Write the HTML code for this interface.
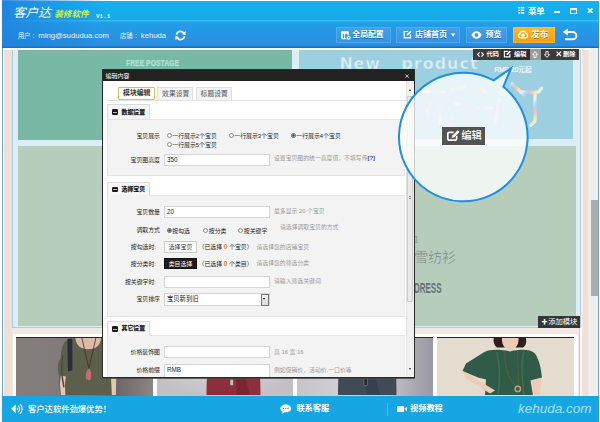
<!DOCTYPE html>
<html lang="zh-CN">
<head>
<meta charset="utf-8">
<title>客户达 装修软件</title>
<style>
*{box-sizing:border-box;margin:0;padding:0}
html,body{width:600px;height:422px;overflow:hidden;background:#fff}
body{position:relative;font-family:"Liberation Sans","Noto Sans CJK SC",sans-serif;font-size:7px;color:#333;-webkit-text-size-adjust:none}
.abs{position:absolute}
.t{position:absolute;white-space:nowrap;line-height:1}
/* header */
#top{left:0;top:0;width:600px;height:22px;background:linear-gradient(90deg,rgba(32,128,222,0.9) 0,rgba(32,135,225,0.6) 45px,rgba(32,140,228,0) 110px),linear-gradient(#fff 0,#fff 0.9px,#14b3ee 1.4px,#16a9e9 19.5px,#3bbcf0 20.5px,#2aa6ea 22px)}
#bar2{left:0;top:22px;width:600px;height:25.8px;background:linear-gradient(90deg,rgba(26,120,214,0.55) 0,rgba(26,125,218,0) 100px),linear-gradient(#219fea,#2a8ce0 24.2px,#1b6db8 24.8px)}
#bot{left:0;top:395.7px;width:600px;height:27px;background:#16a6e3}
.btn{position:absolute;top:27px;height:15.7px;background:linear-gradient(#41a1ea,#3493e2);box-shadow:inset 0 0 0 0.7px #5cb1ef;text-shadow:0 0.5px 0.5px rgba(0,40,100,0.45);border-radius:1px;color:#fff;font-size:8px;line-height:15.5px;white-space:nowrap;font-weight:bold}
/* page */
#page{left:2px;top:47px;width:588px;height:349px;background:#f0e8e1;overflow:hidden}
.ph{top:290.1px;height:59px;border-top:1.5px solid #2a2522;overflow:hidden}
/* modal */
#modal{left:102px;top:69px;width:312.5px;height:309.3px;box-shadow:0 0.8px 0 #444;background:#fff;border:1px solid #2a2a2a;overflow:hidden}
#mtitle{left:0;top:0;width:312px;height:10.5px;background:#222;color:#fff}
.sec{position:absolute;background:#f3f3f3;border:1px solid #e4e4e4;border-right-color:#ececec}
.sech{position:absolute;background:#f6f6f6;border:1px solid #dcdcdc;border-bottom:1px solid #f3f3f3}
.ico{position:absolute;left:4.4px;top:3.9px;width:6px;height:5.5px;background:#1a1a1a;border-radius:1.2px}
.ico:after{content:"";position:absolute;left:1.3px;top:2.35px;width:3.4px;height:0.8px;background:#bbb}
.tab{position:absolute;background:#f3f3f3;border:1px solid #dedede;border-bottom:none;font-size:6.8px;color:#555}
.tab.on{background:#fff;border:1px solid #e5b85c;border-radius:1px}
.lab{margin-top:1px;position:absolute;text-align:right;color:#222;white-space:nowrap;line-height:1;font-size:5.9px}
.inp{position:absolute;background:#fff;border:1px solid #d4d4d4;font-size:6.3px;padding-left:2px;color:#222;white-space:nowrap}
.hint{margin-top:0.9px;position:absolute;color:#999;white-space:nowrap;line-height:1;font-size:5.85px}
.rad{display:inline-block;width:5.4px;height:5.4px;border:1px solid #8e8e8e;border-radius:50%;background:#fafafa;vertical-align:-0.8px;margin-right:0.4px}
.rad.on{background:radial-gradient(#1d3f78 35%,#8fb0d8 60%,#e8eef6 75%);border-color:#667}
.opt{margin-top:0.7px;position:absolute;white-space:nowrap;line-height:1;font-size:5.9px;color:#222}
.bt{position:absolute;font-size:5.9px;text-align:center;line-height:10px;white-space:nowrap}
</style>
</head>
<body>
<!-- page background -->
<div class="abs" id="page">
  <div class="abs" style="left:0;top:0;width:2.2px;height:349px;background:#fafcfe"></div>
  <div class="abs" style="left:2.2px;top:0;width:8.3px;height:349px;background:#ece0d7"></div>
  <div class="abs" style="left:577.4px;top:0;width:10.6px;height:349px;background:linear-gradient(90deg,#b4cde2 0,#b4cde2 1px,#fbfaf9 1.2px,#fbfaf9 2.4px,#eee1d8 3.6px,#eee1d8 8.5px,#f5f0ed 10.6px)"></div>
  <!-- module area light-blue frame -->
  <div class="abs" style="left:10.2px;top:0;width:568.4px;height:281.4px;background:#dcedf5;border:1.2px solid #aec9e0;border-top:none"></div>
  <!-- row 1 -->
  <div class="abs" style="left:15.5px;top:3.3px;width:274px;height:89.4px;background:#78b9a6">
    <span class="t" style="left:108.3px;top:8.3px;font-size:8.4px;font-weight:bold;color:#b2dfd0;-webkit-text-stroke:0.25px #b2dfd0;transform:scaleX(0.815);transform-origin:0 0">FREE POSTAGE</span>
  </div>
  <div class="abs" style="left:297px;top:3.4px;width:274px;height:88.8px;background:#9cd0e0;overflow:hidden">
    <span class="t" style="left:40.4px;top:5.6px;font-size:15.9px;font-weight:bold;color:#dceef5;font-family:'DejaVu Sans',sans-serif;letter-spacing:0.9px;-webkit-text-stroke:0.4px #9cd0e0">New</span>
    <span class="t" style="left:102.4px;top:5.6px;font-size:15.9px;font-weight:bold;color:#dceef5;font-family:'DejaVu Sans',sans-serif;letter-spacing:1.05px;-webkit-text-stroke:0.4px #9cd0e0">product</span>
    <span class="t" style="left:195.5px;top:16.4px;font-size:6.6px;color:#f2fafc;-webkit-text-stroke:0.2px #f2fafc">RMB 20元起</span>
    <svg class="abs" style="left:0;top:0" width="274" height="93" viewBox="299 50.2 274 93" fill="none" stroke-width="3.2" stroke-linecap="round" stroke-linejoin="round">
      <defs><linearGradient id="cf" x1="0" y1="0" x2="12" y2="9" gradientUnits="userSpaceOnUse" spreadMethod="repeat"><stop offset="0" stop-color="#f3b9c6"/><stop offset="0.25" stop-color="#f6e6b0"/><stop offset="0.5" stop-color="#e9f3f6"/><stop offset="0.75" stop-color="#b9d6ee"/><stop offset="1" stop-color="#f3b9c6"/></linearGradient></defs>
      <g stroke="url(#cf)">
        <path d="M512 84L524 95M520.5 92.3H538.5L541.5 88.5M535 94.5V121.5L530.5 125.5"/>
        <path opacity="0.6" d="M480 88L489 96M478 108H492M497 92H508M500 100L495 122"/>
        <path opacity="0.6" d="M424 92H445M430 102L427 112M452 90L464 87M440 106V124M456 104H466M452 118L449 126"/>
      </g>
    </svg>
  </div>
  <!-- row 2 -->
  <div class="abs" style="left:15.5px;top:99.3px;width:274px;height:179.7px;background:#b6cdbc"></div>
  <div class="abs" style="left:297px;top:99.3px;width:276.7px;height:179.7px;background:#b6cdbc">
    <span class="t" style="left:111px;top:89.7px;font-size:8px;color:#7f908d">包</span>
    <span class="t" style="left:115.3px;top:104.9px;font-size:13.9px;font-weight:300;color:#788888">雪纺衫</span>
    <span class="t" style="left:115px;top:134.9px;font-size:14.5px;font-weight:bold;color:#62737b;transform:scaleX(0.55);transform-origin:0 0">DRESS</span>
  </div>
  <!-- add module button -->
  <div class="abs" style="left:536px;top:268.5px;width:42px;height:12.5px;background:#32373b">
    <span class="t" style="left:3.4px;top:3.2px;font-size:6px;color:#fff;font-weight:bold">✚</span>
    <span class="t" style="left:10.2px;top:2.7px;font-size:7.3px;color:#fff">添加模块</span>
  </div>
  <!-- photos -->
  <div class="abs" style="left:10.5px;top:287px;width:565.8px;height:63px;background:#fff"></div>
  <div class="abs ph" id="p1" style="left:14.1px;width:137.1px;background:linear-gradient(90deg,#837d7c,#7f7978 50%,#6f6865 74%,#8c8583)"><svg class="abs" style="left:0;top:0" width="137.1" height="57" viewBox="16.1 338.6 137.1 57">
<path d="M75 338H101.5L101 345C99 351 78 351 76 345Z" fill="#dcbba6"/>
<path d="M66 341C62 345 61 352 61 358C58 362 57 370 59 376L60 396H113L113 362C112 352 109 345 104 340L101 338.6C101 354 76 354 75.5 338.6Z" fill="#5d5f4d"/>
<path d="M61 376L60 384L61 396H65.5L65 384L66 377Z" fill="#e3c6b4"/>
<path d="M63 356C61 366 62 378 64 388" fill="none" stroke="#4a4c3d" stroke-width="1.5"/>
<path d="M67.5 339.5L72.4 339L72.4 371L68 372Z" fill="#2a2c3a"/>
<path d="M82 338.6L89 369L96 338.6" fill="none" stroke="#4a2a2a" stroke-width="0.8"/>
<path d="M89 369C92 372 92 378 90 381L86.5 380C85 376 86 371 89 369Z" fill="#c56a72"/>
<path d="M111 376L116.3 376L116 396H112Z" fill="#e3c6b4"/>
</svg></div>
  <div class="abs ph" id="p2" style="left:154.5px;width:136.7px;background:radial-gradient(ellipse at 50% 40%,#d9d6d9,#c3c0c5 80%)"><svg class="abs" style="left:0;top:0" width="136.7" height="57" viewBox="156.5 338.6 136.7 57">
<path d="M216 340C209 346 206 366 206 396H260C260 366 257 346 250 340Z" fill="#8e2d3b"/>
<path d="M236 350C240 366 246 382 250 396H236Z" fill="#7c2432"/>
<path d="M222 338.6H244L244 347C240 353 226 353 222 347Z" fill="#dcbca8"/>
<rect x="229.5" y="380" width="3.4" height="6" fill="#c9c0b8" stroke="#5a4a44" stroke-width="0.6"/>
</svg></div>
  <div class="abs ph" id="p3" style="left:294.5px;width:136.5px;background:linear-gradient(90deg,#c6c4c9,#d2d0d4 35%,#cac8cd 65%,#a9a7af 87%,#9a98a3)"><svg class="abs" style="left:0;top:0" width="136.5" height="57" viewBox="296.5 338.6 136.5 57">
<path d="M347 340C340 346 337.5 366 337.5 396H396C396 366 394 346 387 340Z" fill="#3f4c58"/>
<path d="M366 350C370 366 376 382 380 396H366Z" fill="#35414c"/>
<path d="M356 338.6H378L378 347C374 353 360 353 356 347Z" fill="#d9b9a5"/>
<rect x="363.5" y="379" width="3.4" height="7" fill="#2a2a30" stroke="#8a7a6a" stroke-width="0.6"/>
</svg></div>
  <div class="abs ph" id="p4" style="left:435px;width:136.8px;background:#e4ddcf"><svg class="abs" style="left:0;top:0" width="136.8" height="57" viewBox="437 338.6 136.8 57">
<path d="M493.8 338.6H525.8C527 342 526 346 523 348L497 348C494 346 493 342 493.8 338.6Z" fill="#2e1f1a"/>
<path d="M502 338.6H518.5C519 345 516 350 510 351C504.5 350 501.5 345 502 338.6Z" fill="#ecccb6"/>
<path d="M482 354C488 350 498 349.5 510 352C522 349.5 530 350 535 354C539 360 541 368 542 378L530.5 381L533 396H485L486 380L478 378L462.5 371.5L466 364Z" fill="#2f5b48"/>
<path d="M496 352C500 360 500 380 498 396M524 352C521 362 522 380 524 396" fill="none" stroke="#3e6e58" stroke-width="1.6"/>
<path d="M462.5 371.5L469 375L495 391L490 394L466 379Z" fill="#ecccb6"/>
<path d="M531 381L541.5 378.5L540 396H534Z" fill="#ecccb6"/>
<path d="M505 352C504 366 508 380 517 387M517 352C518 364 518.5 376 518 386" fill="none" stroke="#7a5a38" stroke-width="1.1" stroke-dasharray="1.6 0.9"/>
<circle cx="517.8" cy="389.5" r="2.7" fill="none" stroke="#c9a06a" stroke-width="1.5"/>
</svg></div>
  <div class="abs" style="left:0;top:0;width:588px;height:2.8px;background:#fff"></div>
  <!-- module toolbar -->
  <div class="abs" id="mtb" style="left:471.4px;top:1.6px;width:106px;height:11px;background:#3c3c3c;color:#fff;font-size:6.2px;font-weight:bold">
    <svg class="abs" style="left:3.2px;top:3.1px" width="7" height="5" viewBox="0 0 7 5"><path d="M2.6 0.4L0.6 2.5L2.6 4.6M4.4 0.4L6.4 2.5L4.4 4.6" fill="none" stroke="#fff" stroke-width="1.1"/></svg>
    <span class="t" style="left:13.2px;top:2.5px">代码</span>
    <div class="abs" style="left:28px;top:0;width:28.6px;height:11px;background:#2f2f2f"></div>
    <svg class="abs" style="left:29.8px;top:1.7px" width="8.6" height="8" viewBox="0 0 9 9"><path d="M5 1.6H1.2V7.8H7.4V4.6" fill="none" stroke="#fff" stroke-width="1.3"/><path d="M3.4 5.8L3.9 4L7.3 0.5L8.7 1.9L5.2 5.3Z" fill="#fff"/></svg>
    <span class="t" style="left:40.6px;top:2.5px">编辑</span>
    <div class="abs" style="left:56.6px;top:0;width:10.6px;height:11px;background:#9b9b9b"></div>
    <svg class="abs" style="left:58.9px;top:2.2px" width="6" height="7" viewBox="0 0 6 7"><path d="M3 0.6L5.5 3.4H4.1V6.4H1.9V3.4H0.5Z" fill="none" stroke="#fff" stroke-width="0.9"/></svg>
    <svg class="abs" style="left:70.3px;top:2.2px" width="6" height="7" viewBox="0 0 6 7"><path d="M3 6.4L5.5 3.6H4.1V0.6H1.9V3.6H0.5Z" fill="none" stroke="#fff" stroke-width="0.9"/></svg>
    <svg class="abs" style="left:82.6px;top:2.9px" width="5.6" height="5.6" viewBox="0 0 6 6"><path d="M0.6 0.6L5.4 5.4M5.4 0.6L0.6 5.4" stroke="#fff" stroke-width="1.3"/></svg>
    <span class="t" style="left:89.6px;top:2.5px">删除</span>
  </div>
  <!-- scrollbar -->
</div>
<div class="abs" style="left:590px;top:46px;width:8.8px;height:350px;background:#f1efee"></div>
<div class="abs" style="left:591px;top:200.3px;width:7px;height:95.5px;background:#acacae"></div>
<div class="abs" style="left:597.6px;top:46.3px;width:1.2px;height:350px;background:#6ea6d8"></div>
<div class="abs" style="left:0;top:46.3px;width:3px;height:350px;background:linear-gradient(90deg,#fff 0,#fff 1.6px,#6ea6d8 1.9px,#6ea6d8 2.8px,#f3f6fa 3px)"></div>


<!-- header -->
<div class="abs" id="top">
  <span class="t" style="left:13px;top:6.8px;font-size:12.4px;font-weight:400;font-style:italic;color:#fff;letter-spacing:-0.3px;transform:scaleX(1.03);transform-origin:0 0;font-family:'Liberation Sans','Noto Sans CJK SC',sans-serif">客户达</span>
  <span class="t" style="left:54.2px;top:10.3px;font-size:8.6px;font-weight:bold;font-style:italic;color:#d6ef3b">装修软件</span>
  <span class="t" style="left:96px;top:13.6px;font-size:6px;color:#e8f4ff;font-family:'Liberation Mono',monospace;font-weight:bold">V1.1</span>
  <svg class="abs" style="left:518px;top:7px" width="6.5" height="7" viewBox="0 0 6 7"><g fill="#fff"><rect x="0" y="0" width="1.6" height="1.4"/><rect x="2.4" y="0" width="3.6" height="1.4"/><rect x="0" y="2.6" width="1.6" height="1.4"/><rect x="2.4" y="2.6" width="3.6" height="1.4"/><rect x="0" y="5.2" width="1.6" height="1.4"/><rect x="2.4" y="5.2" width="3.6" height="1.4"/></g></svg>
  <span class="t" style="left:528px;top:6.5px;font-size:8.3px;font-weight:bold;color:#fff">菜单</span>
  <div class="abs" style="left:554px;top:11px;width:6px;height:2px;background:#fff"></div>
  <div class="abs" style="left:570px;top:8px;width:7px;height:5.5px;border:1px solid #fff;border-top-width:2px"></div>
  <svg class="abs" style="left:586.6px;top:7.9px" width="6.4" height="5.6" viewBox="0 0 6 6"><path d="M0.5 0.5L5.5 5.5M5.5 0.5L0.5 5.5" stroke="#fff" stroke-width="1.7"/></svg>
</div>
<div class="abs" id="bar2">
  <span class="t" style="left:18px;top:10.7px;font-size:6.3px;color:#eaf5ff">用户</span><span class="t" style="left:32.5px;top:10px;font-size:7.4px;color:#eaf5ff">:</span><span class="t" style="left:38.3px;top:10px;font-size:7.7px;color:#eaf5ff">ming@sududua.com</span>
  <span class="t" style="left:120px;top:10.7px;font-size:6.3px;color:#eaf5ff">店铺</span><span class="t" style="left:135px;top:10px;font-size:7.4px;color:#eaf5ff">:</span><span class="t" style="left:140.8px;top:10px;font-size:7.7px;color:#eaf5ff">kehuda</span>
  <svg class="abs" style="left:175px;top:7.6px" width="11" height="11" viewBox="0 0 11 11"><path d="M1.4 4.6A4.1 4.1 0 0 1 8.6 2.9M9.6 6.4A4.1 4.1 0 0 1 2.4 8.1" fill="none" stroke="#fff" stroke-width="1.7"/><path d="M10.7 1L10.5 5.2L6.9 4.1ZM0.3 10L0.5 5.8L4.1 6.9Z" fill="#fff"/></svg>
</div>
<div class="btn" style="left:335.5px;width:55px;padding-left:16.8px;font-size:7.85px">全局配置</div>
<div class="btn" style="left:396px;width:64px;padding-left:19px">店铺首页<span style="font-size:6px;vertical-align:0.5px;margin-left:2.6px;display:inline-block;transform:scaleX(1.15)">▼</span></div>
<div class="btn" style="left:465.5px;width:41.5px;padding-left:20px">预览</div>
<div class="btn" style="left:512.5px;width:42px;padding-left:18.8px;background:linear-gradient(#fdb826,#f59c13);font-size:8.5px;font-weight:500;-webkit-text-stroke:0.2px #fff;box-shadow:inset 0 0 0 0.6px #ffc95a">发布</div>
<svg class="abs" style="left:340.8px;top:31.2px" width="10.4" height="9.2" viewBox="340.8 31.2 10.4 9.2"><rect x="341" y="31.5" width="7.6" height="8" rx="0.8" fill="#fff"/><rect x="342.5" y="34.1" width="1.5" height="4.2" fill="#3a9ae6"/><rect x="344.9" y="34.1" width="2.6" height="4.2" fill="#3a9ae6"/><circle cx="348.5" cy="38" r="2.3" fill="#e4f2fd" stroke="#3a9ae6" stroke-width="0.7"/><circle cx="348.5" cy="38" r="0.7" fill="#3a9ae6"/></svg>
<svg class="abs" style="left:402.8px;top:30.2px" width="9" height="9" viewBox="0 0 9 9"><path d="M5 1.5H1.2V7.8H7.5V4.5" fill="none" stroke="#fff" stroke-width="1.2"/><path d="M3.6 5.6L4 4L7.4 0.6L8.6 1.8L5.2 5.2Z" fill="#fff"/></svg>
<svg class="abs" style="left:471px;top:30.8px" width="11" height="8" viewBox="0 0 11 8"><path d="M0.3 4C2 1.2 3.8 0.3 5.5 0.3S9 1.2 10.7 4C9 6.8 7.2 7.7 5.5 7.7S2 6.8 0.3 4Z" fill="#fff"/><circle cx="5.5" cy="4" r="1.9" fill="#3a9ae6"/></svg>
<svg class="abs" style="left:518px;top:30.3px" width="10" height="8.6" viewBox="0 0 11 9"><path d="M2.6 8.4A2.4 2.4 0 0 1 2.3 3.7A3.3 3.3 0 0 1 8.7 3.4A2.6 2.6 0 0 1 8.6 8.4Z" fill="none" stroke="#fff" stroke-width="1.55"/><path d="M5.5 8.6V4.6M3.7 6.1L5.5 4.2L7.3 6.1" fill="none" stroke="#fff" stroke-width="1.4"/></svg>
<svg class="abs" style="left:561.5px;top:27.6px" width="17" height="13.5" viewBox="0 0 18 15"><path d="M5 4.5H11.5A4 4 0 0 1 11.5 12.5H3" fill="none" stroke="#fff" stroke-width="2.2"/><path d="M0.5 4.5L6 0.6V8.4Z" fill="#fff"/></svg>

<div class="abs" id="bot">
  <svg class="abs" style="left:11.2px;top:7px" width="12.4" height="11.6" viewBox="0 0 12.4 11.6"><path d="M0.2 5.8L4.7 1.4V10.2Z" fill="#fff"/><path d="M5.8 4.2L7.4 5.8L5.8 7.4Z" fill="#dff4fc"/><path d="M7.2 2.6A4.4 4.4 0 0 1 7.2 9M9 0.9A6.6 6.6 0 0 1 9 10.7" fill="none" stroke="#e8f8fe" stroke-width="1.15"/></svg>
  <span class="t" style="left:28px;top:9.3px;font-size:8.3px;font-weight:500;color:#fff;letter-spacing:0">客户达软件劲爆优势！</span>
  <svg class="abs" style="left:280px;top:8.6px" width="11.5" height="10.5" viewBox="0 0 12 11"><path d="M6 0.5C9.2 0.5 11.6 2.3 11.6 4.6S9.2 8.7 6 8.7C5.5 8.7 5 8.65 4.6 8.55L2 10.4L2.6 7.8C1.2 7 0.4 5.9 0.4 4.6C0.4 2.3 2.8 0.5 6 0.5Z" fill="#fff"/><circle cx="3.6" cy="4.6" r="0.7" fill="#14a4e1"/><circle cx="6" cy="4.6" r="0.7" fill="#14a4e1"/><circle cx="8.4" cy="4.6" r="0.7" fill="#14a4e1"/></svg>
  <span class="t" style="left:296.4px;top:9.4px;font-size:8.2px;font-weight:bold;color:#fff">联系客服</span>
  <svg class="abs" style="left:396.5px;top:9.6px" width="10.5" height="8" viewBox="0 0 12 9"><rect x="0" y="1" width="8" height="7" rx="1" fill="#fff"/><path d="M8.4 4.5L12 1.4V7.6Z" fill="#fff"/></svg>
  <span class="t" style="left:410px;top:9.4px;font-size:8.2px;font-weight:bold;color:#fff">视频教程</span>
  <div class="abs" style="left:386.5px;top:7px;width:1px;height:13px;background:#4dbbea"></div>
  <span class="t" style="left:518px;top:6.6px;font-size:13.5px;font-style:italic;color:#a6e0f7">kehuda.com</span>
</div>

<!-- modal -->
<div class="abs" id="modal">
  <div class="abs" id="mtitle"><span class="t" style="left:2.5px;top:2.6px;font-size:6px;color:#fff">编辑内容</span><svg class="abs" style="left:301.6px;top:3.6px" width="4.2" height="4.2" viewBox="0 0 5 5"><path d="M0.5 0.5L4.5 4.5M4.5 0.5L0.5 4.5" stroke="#ddd" stroke-width="1"/></svg></div>
  <div class="abs" style="left:3.5px;top:30.2px;width:300px;height:1px;background:#e3e3e3"></div>
  <div class="tab on" style="left:14.5px;top:16.5px;width:37.5px;height:13.5px"><span class="t" style="left:4.6px;top:2.8px;font-weight:bold;color:#333">模块编辑</span></div>
  <div class="tab" style="left:54.3px;top:17px;width:36px;height:13px"><span class="t" style="left:3.8px;top:2.7px">效果设置</span></div>
  <div class="tab" style="left:92.6px;top:17px;width:36.8px;height:13px"><span class="t" style="left:4px;top:2.7px">标题设置</span></div>
  <div class="sec" style="left:3.5px;top:48.5px;width:298.8px;height:57.5px"></div>
  <div class="sech" style="left:3.5px;top:34.3px;width:43px;height:15.200000000000003px"><i class="ico"></i><span class="t" style="left:14px;top:4.7px;font-size:5.9px;font-weight:bold;color:#111;-webkit-text-stroke:0.15px #111">数据设置</span></div>
  <span class="lab" style="left:-3px;width:60px;top:62.6px">宝贝展示</span>
  <span class="opt" style="left:63.5px;top:62.25px"><i class="rad"></i>一行展示2个宝贝</span>
  <span class="opt" style="left:125.5px;top:62.25px"><i class="rad"></i>一行展示3个宝贝</span>
  <span class="opt" style="left:187.5px;top:62.25px"><i class="rad on"></i>一行展示4个宝贝</span>
  <span class="opt" style="left:63.5px;top:71.05px"><i class="rad"></i>一行展示5个宝贝</span>
  <span class="lab" style="left:-3px;width:60px;top:87.1px">宝贝图高度</span>
  <div class="inp" style="left:61px;width:105.5px;top:84.2px;height:12.3px;line-height:10.3px;font-size:6.3px">350</div>
  <span class="hint" style="left:171px;top:85.2px">设置宝贝图的统一高度值，不填写传<b style="color:#3a3ac0">[?]</b></span>
  <div class="sec" style="left:3.5px;top:125px;width:298.8px;height:122px"></div>
  <div class="sech" style="left:3.5px;top:112px;width:43.5px;height:14px"><i class="ico"></i><span class="t" style="left:14px;top:3.9px;font-size:5.9px;font-weight:bold;color:#111;-webkit-text-stroke:0.15px #111">选择宝贝</span></div>
  <span class="lab" style="left:-3px;width:60px;top:138.75px">宝贝数量</span>
  <div class="inp" style="left:61px;width:105.5px;top:136px;height:12px;line-height:10px">20</div>
  <span class="hint" style="left:171px;top:138.45px">最多显示 20 个宝贝</span>
  <span class="lab" style="left:-3px;width:60px;top:157.25px">调取方式</span>
  <span class="opt" style="left:63.5px;top:157.25px"><i class="rad on"></i>按勾选</span>
  <span class="opt" style="left:100px;top:157.25px"><i class="rad"></i>按分类</span>
  <span class="opt" style="left:135px;top:157.25px"><i class="rad"></i>按关键字</span>
  <span class="hint" style="left:177px;top:154.25px">请选择调取宝贝的方式</span>
  <span class="lab" style="left:-7px;width:60px;top:173.75px">按勾选时:</span>
  <div class="bt" style="left:61px;top:171px;width:33px;height:12px;background:#fff;border:1px solid #ccc;color:#333">选择宝贝</div>
  <span class="opt" style="left:95.5px;top:173.7px">（已选择 <b style="color:#e8832a;font-size:6.6px">0</b> 个宝贝）</span>
  <span class="hint" style="left:153.5px;top:174.05px">请选择您的店铺宝贝</span>
  <span class="lab" style="left:-7px;width:60px;top:191px">按分类时:</span>
  <div class="bt" style="left:61px;top:187.5px;width:33px;height:11.3px;background:#1c1c1c;border:1px solid #111;color:#fff">类目选择</div>
  <span class="opt" style="left:95.5px;top:190.7px">（已选择 <b style="color:#e8832a;font-size:6.6px">0</b> 个类目）</span>
  <span class="hint" style="left:153.5px;top:190.45px">请选择您的筛选分类</span>
  <span class="lab" style="left:-7px;width:60px;top:208.75px">按关键字时:</span>
  <div class="inp" style="left:61px;width:105.5px;top:206.2px;height:11.8px;line-height:10.0px"></div>
  <span class="hint" style="left:171px;top:208.05px">请输入筛选关键词</span>
  <span class="lab" style="left:-3px;width:60px;top:226.05px">宝贝排序</span>
  <div class="inp" style="left:61px;width:105.5px;top:223.3px;height:12.5px;line-height:10.5px">宝贝新到旧</div>
  <div class="abs" style="left:157.6px;top:223.6px;width:8.4px;height:12px;background:linear-gradient(#f6f6f6,#dadada);border:1px solid #777"><i class="abs" style="left:1.4px;top:3.8px;border:1.9px solid transparent;border-top:2.6px solid #111"></i></div>
  <div class="sec" style="left:3.5px;top:264.8px;width:298.8px;height:65.5px"></div>
  <div class="sech" style="left:3.5px;top:251.3px;width:43.5px;height:14.5px"><i class="ico"></i><span class="t" style="left:14px;top:4px;font-size:5.9px;font-weight:bold;color:#111;-webkit-text-stroke:0.15px #111">其它设置</span></div>
  <span class="lab" style="left:-3px;width:60px;top:278.75px">价格装饰图</span>
  <div class="inp" style="left:61px;width:105.5px;top:276px;height:12px;line-height:10px"></div>
  <span class="hint" style="left:171px;top:278.75px">高 16 宽 16</span>
  <span class="lab" style="left:-3px;width:60px;top:296.75px">价格前缀</span>
  <div class="inp" style="left:61px;width:105.5px;top:294px;height:16px;line-height:10px">RMB</div>
  <span class="hint" style="left:171px;top:296.75px">例如促销价，活动价,一口价等</span>
  <div class="abs" style="left:302.6px;top:11px;width:8px;height:298px;background:#f1f1f1;border-left:1px solid #e2e2e2"></div>
  <div class="abs" style="left:304.2px;top:26px;width:5.8px;height:206px;background:#e9e9e9;border:1px solid #cdcdcd;border-radius:1px"></div>
  <i class="abs" style="left:305.5px;top:19.2px;border:1.7px solid transparent;border-bottom:2.4px solid #333;border-top:none"></i>
  <i class="abs" style="left:305.7px;top:298.4px;border:1.7px solid transparent;border-top:2.4px solid #333;border-bottom:none"></i>
  <div class="abs" style="left:305.9px;top:126px;width:2.6px;height:3px;border-top:1px solid #888;border-bottom:1px solid #888"></div>
</div>
<!-- callout -->
<svg class="abs" style="left:390px;top:60px" width="150" height="155" viewBox="390 60 150 155">
  <path d="M493.7 80.4L511 68.3L503.4 86.8A64.3 64.3 0 1 1 493.7 80.4Z" fill="rgba(255,255,255,0.77)" stroke="#1b8ee8" stroke-width="2" stroke-linejoin="miter" stroke-miterlimit="10"/>
</svg>
<div class="abs" style="left:442.2px;top:126.9px;width:42.6px;height:18.3px;background:#535353">
  <svg class="abs" style="left:3.8px;top:2.1px" width="14.5" height="12.5" viewBox="446 129 14.5 12.5"><path d="M453.6 132.4H449.2Q447.8 132.4 447.8 133.8V138.8Q447.8 140.2 449.2 140.2H455.2Q456.6 140.2 456.6 138.8V135.8" fill="none" stroke="#fff" stroke-width="1.7"/><path d="M451.3 138.4L452 135.6L457.8 129.8L460 132L454.2 137.7Z" fill="#fff" stroke="#535353" stroke-width="0.7"/></svg>
  <span class="t" style="left:19px;top:4.1px;font-size:10.4px;font-weight:500;color:#fff">编辑</span>
</div>
<div class="abs" style="left:0;top:0;width:1.6px;height:422px;background:#fff"></div>
<div class="abs" style="left:598.75px;top:0;width:1.25px;height:422px;background:#fff"></div>
</body>
</html>
